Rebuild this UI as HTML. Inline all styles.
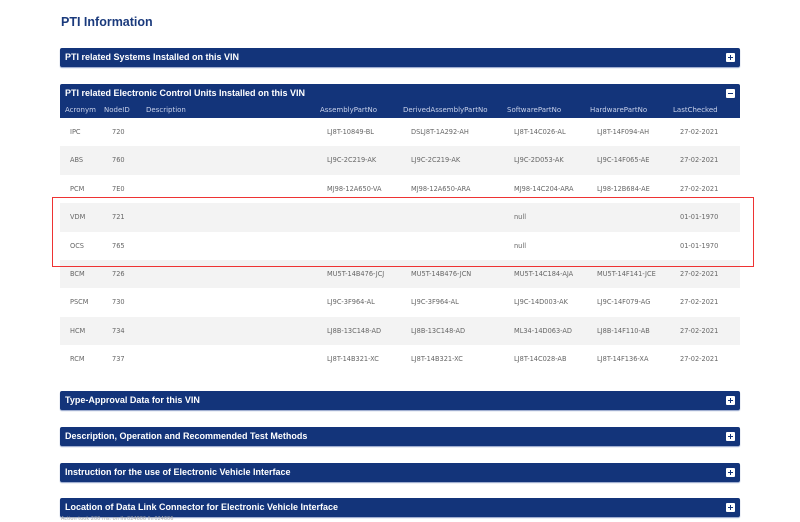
<!DOCTYPE html>
<html><head><style>
body{margin:0;width:800px;height:521px;background:#fff;font-family:"DejaVu Sans","Liberation Sans",sans-serif;position:relative;overflow:hidden}
.t{position:absolute;left:61px;top:15px;font-family:"Liberation Sans",sans-serif;font-size:12.5px;font-weight:bold;color:#1a3a7c}
.bar{position:absolute;left:60px;width:680px;height:19px;background:#13347a;border-radius:2px;color:#fff;font-family:"Liberation Sans",sans-serif;font-weight:bold;font-size:9px;line-height:19px;box-shadow:0 1px 1px #8fa0c8}
.bar span{position:absolute;left:5px}
.ic{position:absolute;right:5px;top:5px;width:9px;height:9px;background:#fff;border-radius:1px}
.ic:before{content:"";position:absolute;left:2px;top:4px;width:5px;height:1.4px;background:#13347a}
.ic.p:after{content:"";position:absolute;left:3.8px;top:2px;width:1.4px;height:5px;background:#13347a}
.hdr{position:absolute;left:60px;top:102px;width:680px;height:16px;background:#13347a;font-size:7px;color:#c9d2ea;line-height:16px}
.row{position:absolute;left:60px;width:680px;height:28.4px;font-size:6.6px;color:#666;line-height:28.4px}
.g{background:#f3f3f3}
.c{position:absolute;white-space:nowrap}
.box{position:absolute;left:52px;top:197px;width:700px;height:68px;border:1px solid #e33}
.ft{position:absolute;left:61px;top:516px;font-size:5px;color:#aaa}
</style></head><body>
<div class="t">PTI Information</div>
<div class="bar" style="top:48px"><span>PTI related Systems Installed on this VIN</span><div class="ic p"></div></div>
<div class="bar" style="top:84px;height:20px;border-radius:2px 2px 0 0;box-shadow:none"><span>PTI related Electronic Control Units Installed on this VIN</span><div class="ic"></div></div>
<div class="hdr"><span class="c" style="left:5px">Acronym</span><span class="c" style="left:44px">NodeID</span><span class="c" style="left:86px">Description</span><span class="c" style="left:260px">AssemblyPartNo</span><span class="c" style="left:343px">DerivedAssemblyPartNo</span><span class="c" style="left:447px">SoftwarePartNo</span><span class="c" style="left:530px">HardwarePartNo</span><span class="c" style="left:613px">LastChecked</span></div>

<div class="row" style="top:118px"><span class="c" style="left:10px">IPC</span><span class="c" style="left:52px">720</span><span class="c" style="left:267px">LJ8T-10849-BL</span><span class="c" style="left:351px">DSLJ8T-1A292-AH</span><span class="c" style="left:454px">LJ8T-14C026-AL</span><span class="c" style="left:537px">LJ8T-14F094-AH</span><span class="c" style="left:620px">27-02-2021</span></div>
<div class="row g" style="top:146.4px"><span class="c" style="left:10px">ABS</span><span class="c" style="left:52px">760</span><span class="c" style="left:267px">LJ9C-2C219-AK</span><span class="c" style="left:351px">LJ9C-2C219-AK</span><span class="c" style="left:454px">LJ9C-2D053-AK</span><span class="c" style="left:537px">LJ9C-14F065-AE</span><span class="c" style="left:620px">27-02-2021</span></div>
<div class="row" style="top:174.8px"><span class="c" style="left:10px">PCM</span><span class="c" style="left:52px">7E0</span><span class="c" style="left:267px">MJ98-12A650-VA</span><span class="c" style="left:351px">MJ98-12A650-ARA</span><span class="c" style="left:454px">MJ98-14C204-ARA</span><span class="c" style="left:537px">LJ98-12B684-AE</span><span class="c" style="left:620px">27-02-2021</span></div>
<div class="row g" style="top:203.2px"><span class="c" style="left:10px">VDM</span><span class="c" style="left:52px">721</span><span class="c" style="left:454px">null</span><span class="c" style="left:620px">01-01-1970</span></div>
<div class="row" style="top:231.6px"><span class="c" style="left:10px">OCS</span><span class="c" style="left:52px">765</span><span class="c" style="left:454px">null</span><span class="c" style="left:620px">01-01-1970</span></div>
<div class="row g" style="top:260px"><span class="c" style="left:10px">BCM</span><span class="c" style="left:52px">726</span><span class="c" style="left:267px">MU5T-14B476-JCJ</span><span class="c" style="left:351px">MU5T-14B476-JCN</span><span class="c" style="left:454px">MU5T-14C184-AJA</span><span class="c" style="left:537px">MU5T-14F141-JCE</span><span class="c" style="left:620px">27-02-2021</span></div>
<div class="row" style="top:288.4px"><span class="c" style="left:10px">PSCM</span><span class="c" style="left:52px">730</span><span class="c" style="left:267px">LJ9C-3F964-AL</span><span class="c" style="left:351px">LJ9C-3F964-AL</span><span class="c" style="left:454px">LJ9C-14D003-AK</span><span class="c" style="left:537px">LJ9C-14F079-AG</span><span class="c" style="left:620px">27-02-2021</span></div>
<div class="row g" style="top:316.8px"><span class="c" style="left:10px">HCM</span><span class="c" style="left:52px">734</span><span class="c" style="left:267px">LJ8B-13C148-AD</span><span class="c" style="left:351px">LJ8B-13C148-AD</span><span class="c" style="left:454px">ML34-14D063-AD</span><span class="c" style="left:537px">LJ8B-14F110-AB</span><span class="c" style="left:620px">27-02-2021</span></div>
<div class="row" style="top:345.2px"><span class="c" style="left:10px">RCM</span><span class="c" style="left:52px">737</span><span class="c" style="left:267px">LJ8T-14B321-XC</span><span class="c" style="left:351px">LJ8T-14B321-XC</span><span class="c" style="left:454px">LJ8T-14C028-AB</span><span class="c" style="left:537px">LJ8T-14F136-XA</span><span class="c" style="left:620px">27-02-2021</span></div>
<div class="box"></div>

<div class="bar" style="top:391px"><span>Type-Approval Data for this VIN</span><div class="ic p"></div></div>
<div class="bar" style="top:427px"><span>Description, Operation and Recommended Test Methods</span><div class="ic p"></div></div>
<div class="bar" style="top:463px"><span>Instruction for the use of Electronic Vehicle Interface</span><div class="ic p"></div></div>
<div class="bar" style="top:498px"><span>Location of Data Link Connector for Electronic Vehicle Interface</span><div class="ic p"></div></div>
<div class="ft">Action took 200 ms. on lhr024606 lhr024606</div>
</body></html>
